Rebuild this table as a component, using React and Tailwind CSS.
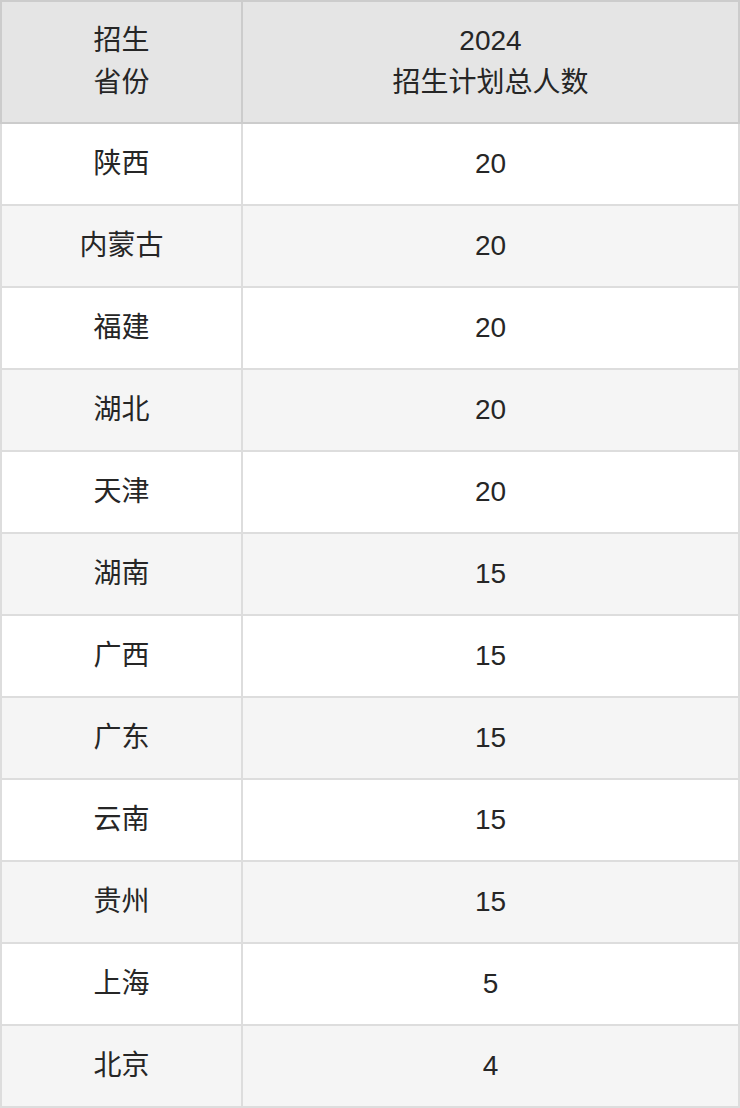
const rows = [
  ["陕西", "20"],
  ["内蒙古", "20"],
  ["福建", "20"],
  ["湖北", "20"],
  ["天津", "20"],
  ["湖南", "15"],
  ["广西", "15"],
  ["广东", "15"],
  ["云南", "15"],
  ["贵州", "15"],
  ["上海", "5"],
  ["北京", "4"],
];

export default function App() {
  return (
    <div className="w-[740px] bg-white text-[28px] text-[#262626] font-['Liberation_Sans','Noto_Sans_CJK_SC',sans-serif]">
      {/* header */}
      <div className="flex h-[124px] border-2 border-[#cccccc] bg-[#e5e5e5] leading-[42px]">
        <div className="w-[241px] border-r-2 border-[#cccccc] flex flex-col items-center justify-center">
          <span>招生</span>
          <span>省份</span>
        </div>
        <div className="flex-1 flex flex-col items-center justify-center">
          <span>2024</span>
          <span>招生计划总人数</span>
        </div>
      </div>
      {rows.map(([prov, n], i) => (
        <div
          key={prov}
          className={`flex h-[82px] border-x-2 border-b-2 border-[#dddddd] ${i % 2 ? "bg-[#f5f5f5]" : "bg-white"}`}
        >
          <div className="w-[241px] border-r-2 border-[#dddddd] flex items-center justify-center">{prov}</div>
          <div className="flex-1 flex items-center justify-center">{n}</div>
        </div>
      ))}
    </div>
  );
}
